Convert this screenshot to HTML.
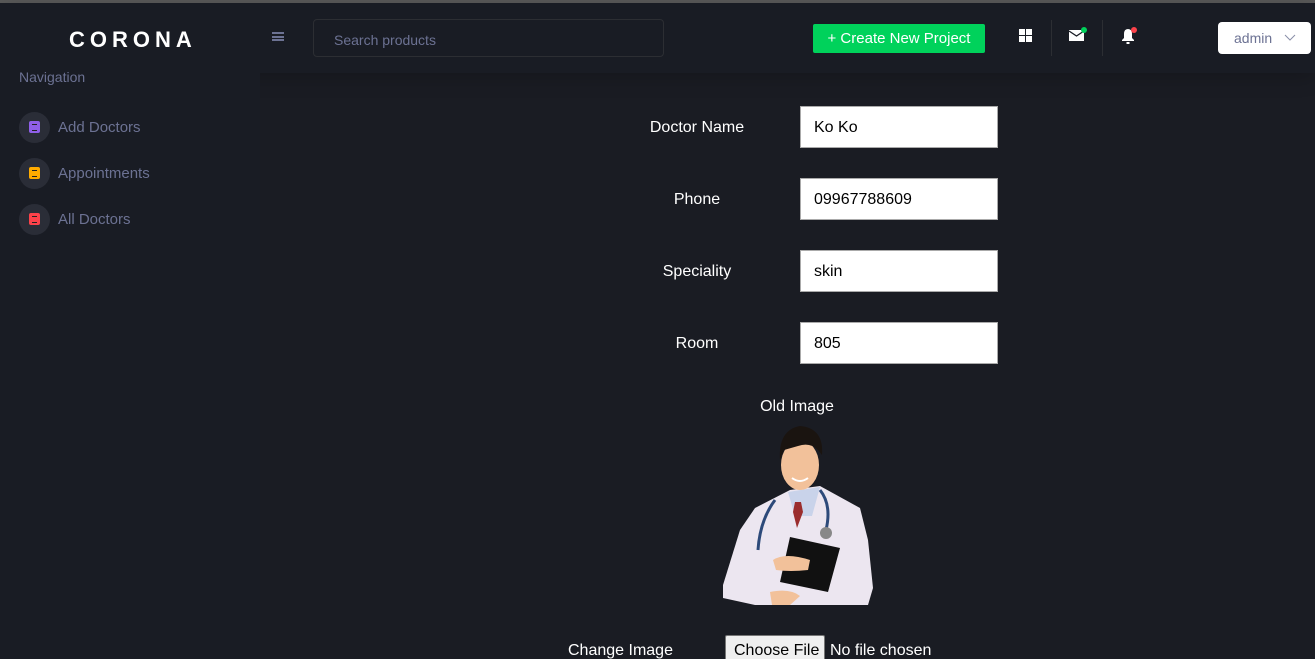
<!DOCTYPE html>
<html><head><meta charset="utf-8"><style>
*{margin:0;padding:0;box-sizing:border-box}
html,body{width:1315px;height:659px;overflow:hidden}
body{background:#1a1c23;font-family:"Liberation Sans",sans-serif;position:relative;color:#fff}
.topline{position:absolute;left:0;top:0;width:1315px;height:3px;background:#5a5a5a}
.nav{position:absolute;left:0;top:3px;width:1315px;height:70px;background:#191c24;box-shadow:0 4px 20px rgba(0,0,0,.2)}
.side{position:absolute;left:0;top:73px;width:260px;height:586px;background:#191c24}
.a{position:absolute}
.lbl{position:absolute;width:200px;text-align:center;font-size:16px;color:#fff}
.inp{position:absolute;left:800px;width:198px;height:42px;background:#fff;border:1px solid #aaa;color:#000;font-size:16px;padding:12px 0 0 13px}
.ni{position:absolute;left:19px;width:31px;height:31px;border-radius:50%;background:#2a2d37}
.ni i{position:absolute;left:10px;top:9px;width:11px;height:12px;border-radius:2px}
.ni i:after{content:"";position:absolute;left:3px;top:3px;width:5px;height:5px;border-top:1px solid #222;border-bottom:1px solid #222}
.nt{position:absolute;left:58px;font-size:15px;color:#6c7293}
</style></head><body>
<div class="topline"></div>
<div class="nav"></div>
<div class="side"></div>
<div class="a" style="left:69px;top:27px;font-size:22px;font-weight:bold;letter-spacing:5px">CORONA</div>
<div class="a" style="left:272px;top:32px;width:12px;height:9px;border-top:2px solid #6c7293;border-bottom:2px solid #6c7293"><div style="margin-top:1.5px;height:2px;background:#6c7293"></div></div>
<div class="a" style="left:313px;top:19px;width:351px;height:38px;border:1px solid #2c2e33;border-radius:4px;padding:12px 0 0 20px;font-size:14px;color:#6c7293">Search products</div>
<div class="a" style="left:813px;top:24px;width:172px;height:29px;background:#00d25b;border-radius:2px;font-size:15px;text-align:center;padding-top:6px">+ Create New Project</div>
<svg class="a" style="left:1018px;top:28px" width="16" height="16"><rect x="1" y="1" width="6" height="6" fill="#fff"/><rect x="8" y="1" width="6" height="6" fill="#fff"/><rect x="1" y="8" width="6" height="6" fill="#fff"/><rect x="8" y="8" width="6" height="6" fill="#fff"/></svg>
<div class="a" style="left:1051px;top:20px;width:1px;height:36px;background:#2c2e33"></div>
<svg class="a" style="left:1068px;top:26px" width="22" height="18"><rect x="1" y="4" width="15" height="11" fill="#fff"/><path d="M1 5 L8.5 10 L16 5" stroke="#191c24" stroke-width="1.3" fill="none"/><circle cx="16" cy="4" r="3" fill="#00d25b"/></svg>
<div class="a" style="left:1102px;top:20px;width:1px;height:36px;background:#2c2e33"></div>
<svg class="a" style="left:1119px;top:26px" width="22" height="20"><path d="M3 15 L3 14 L5 12 L5 8 Q5 3 9 3 Q13 3 13 8 L13 12 L15 14 L15 15 Z" fill="#fff"/><rect x="7.5" y="16" width="3" height="2" fill="#fff"/><circle cx="15" cy="4" r="3" fill="#fc424a"/></svg>
<div class="a" style="left:1218px;top:22px;width:93px;height:32px;background:#fff;border-radius:4px;color:#6c7293;font-size:14px;padding:8px 0 0 16px">admin <svg style="position:absolute;left:66px;top:12px" width="12" height="8"><path d="M1 1 L6 6 L11 1" stroke="#8a8fa8" fill="none"/></svg></div>

<div class="a" style="left:19px;top:69px;font-size:14px;color:#6c7293">Navigation</div>
<div class="ni" style="top:112px"><i style="background:#8f5fe8"></i></div><div class="nt" style="top:119px">Add Doctors</div>
<div class="ni" style="top:158px"><i style="background:#ffab00"></i></div><div class="nt" style="top:165px">Appointments</div>
<div class="ni" style="top:204px"><i style="background:#fc424a"></i></div><div class="nt" style="top:211px">All Doctors</div>

<div class="lbl" style="left:597px;top:119px">Doctor Name</div><div class="inp" style="top:106px">Ko Ko</div>
<div class="lbl" style="left:597px;top:191px">Phone</div><div class="inp" style="top:178px">09967788609</div>
<div class="lbl" style="left:597px;top:263px">Speciality</div><div class="inp" style="top:250px">skin</div>
<div class="lbl" style="left:597px;top:335px">Room</div><div class="inp" style="top:322px">805</div>
<div class="lbl" style="left:697px;top:398px">Old Image</div>

<svg class="a" style="left:700px;top:420px" width="200" height="190">
<polygon points="23,165 40,110 55,88 90,70 120,66 160,88 168,120 173,168 168,185 55,185 23,178" fill="#ece6f0"/>
<polygon points="88,72 120,67 112,96 95,96" fill="#c9d3ea"/>
<polygon points="95,82 101,82 103,92 97,108 93,92" fill="#9b2d2d"/>
<ellipse cx="100" cy="45" rx="19" ry="25" fill="#f2c19a"/>
<path d="M80 40 Q78 10 100 6 Q124 8 122 35 L118 30 Q110 22 98 26 L84 30 Z" fill="#1a1410"/>
<path d="M92 58 Q100 64 108 58" stroke="#fff" stroke-width="2" fill="none"/>
<path d="M120 70 Q132 85 126 110 M75 80 Q60 100 58 130" stroke="#2d4a7a" stroke-width="3" fill="none"/>
<circle cx="126" cy="113" r="6" fill="#888"/>
<polygon points="90,117 140,128 128,172 80,162" fill="#111"/>
<path d="M73 140 Q85 132 110 140 L108 150 Q90 152 76 150 Z" fill="#f2c19a"/>
<path d="M70 172 Q90 168 100 176 L90 185 L72 185 Z" fill="#f2c19a"/>
</svg>

<div class="a" style="left:568px;top:642px;font-size:16px">Change Image</div>
<div class="a" style="left:725px;top:635px;width:100px;height:30px;background:#efefef;border:1px solid #767676;border-radius:2px;color:#000;font-size:16px;padding:6px 0 0 8px">Choose File</div>
<div class="a" style="left:830px;top:642px;font-size:16px">No file chosen</div>
</body></html>
